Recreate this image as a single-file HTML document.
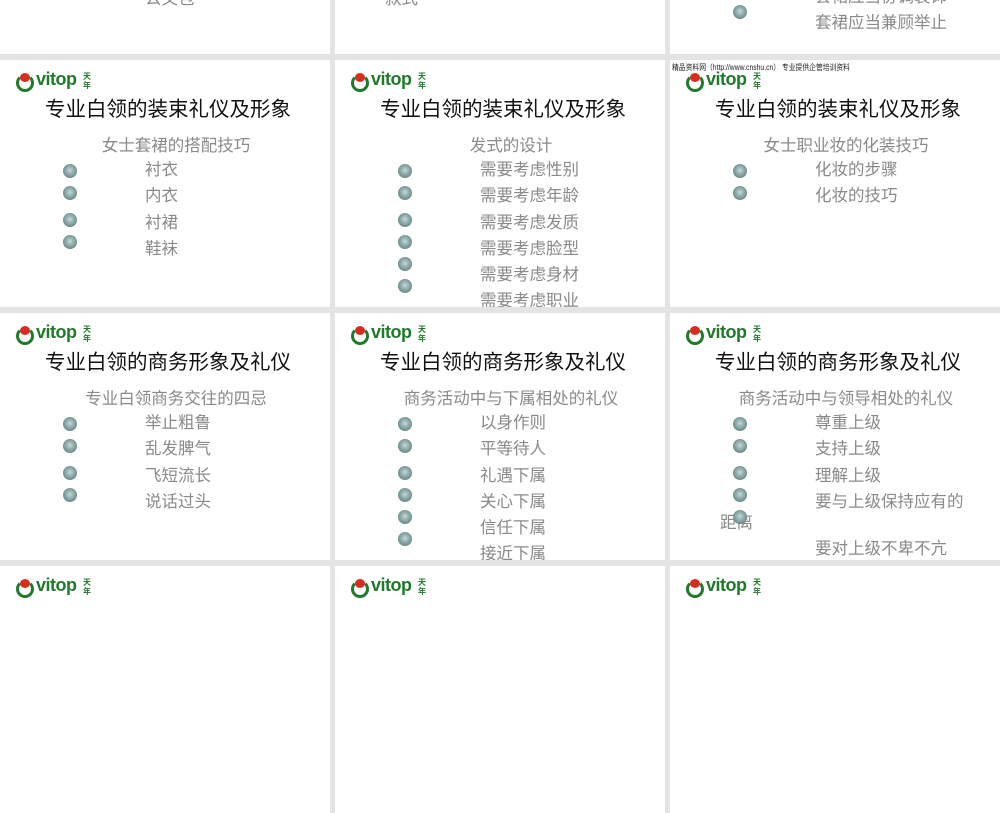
<!DOCTYPE html><html><head><meta charset="utf-8"><style>
body{margin:0;width:1000px;height:600px;background:#e4e4e4;overflow:hidden;position:relative;font-family:"Liberation Sans","Noto Sans CJK SC",sans-serif}
.p{position:absolute;width:330px;height:247px;background:#fff;overflow:hidden}
.t{position:absolute;left:0;width:336px;text-align:center;top:32px;font-size:20.5px;color:#111;white-space:nowrap}
.s{position:absolute;left:0;width:352px;text-align:center;top:72px;font-size:16.5px;color:#8a8a8a;white-space:nowrap}
.i{position:absolute;left:145px;font-size:16.5px;color:#8a8a8a;white-space:nowrap;line-height:20px}
.b{position:absolute;left:63px;width:14px;height:14px;border-radius:50%;background:radial-gradient(circle at 50% 45%,#c8dada 0,#9ab5b5 30%,#6f8d8d 70%,#4e6868 100%)}
.lg{position:absolute;left:16px;top:12px;height:22px}
.lg .c{position:absolute;left:0;top:2px;width:12px;height:12px;border:3px solid #1f7a2a;border-top-color:#fff;border-radius:50%}
.lg .r{position:absolute;left:4px;top:1px;width:10px;height:9px;border-radius:50%;background:#d62d20}
.lg .v{position:absolute;left:20px;top:-3px;font-weight:bold;font-size:18px;color:#1f7a2a;letter-spacing:-0.5px}
.lg .n{position:absolute;left:67px;top:0px;font-size:8px;line-height:9px;color:#1f7a2a;font-weight:bold;width:9px}
.w{position:absolute;left:2px;top:2px;font-size:8px;color:#222;white-space:nowrap;transform:scaleX(.85);transform-origin:left}
</style></head><body>
<div class="p" style="left:0;top:-193px"><div class="i" style="left:145px;top:182px">公文包</div></div>
<div class="p" style="left:335px;top:-193px"><div class="b" style="left:23px;top:177px"></div><div class="i" style="left:50px;top:182px">款式</div></div>
<div class="p" style="left:670px;top:-193px"><div class="i" style="top:180px">套裙应当协调装饰</div><div class="b" style="top:198px"></div><div class="i" style="top:206px">套裙应当兼顾举止</div></div>

<div class="p" style="left:0;top:60px"><div class="lg"><div class="c"></div><div class="r"></div><div class="v">vitop</div><div class="n">天年</div></div>
<div class="t">专业白领的装束礼仪及形象</div><div class="s">女士套裙的搭配技巧</div>
<div class="b" style="top:104px"></div><div class="b" style="top:126px"></div><div class="b" style="top:153px"></div><div class="b" style="top:175px"></div>
<div class="i" style="top:100px">衬衣</div><div class="i" style="top:126px">内衣</div><div class="i" style="top:153px">衬裙</div><div class="i" style="top:179px">鞋袜</div></div>

<div class="p" style="left:335px;top:60px"><div class="lg"><div class="c"></div><div class="r"></div><div class="v">vitop</div><div class="n">天年</div></div>
<div class="t">专业白领的装束礼仪及形象</div><div class="s">发式的设计</div>
<div class="b" style="top:104px"></div><div class="b" style="top:126px"></div><div class="b" style="top:153px"></div><div class="b" style="top:175px"></div><div class="b" style="top:197px"></div><div class="b" style="top:219px"></div>
<div class="i" style="top:100px">需要考虑性别</div><div class="i" style="top:126px">需要考虑年龄</div><div class="i" style="top:153px">需要考虑发质</div><div class="i" style="top:179px">需要考虑脸型</div><div class="i" style="top:205px">需要考虑身材</div><div class="i" style="top:231px">需要考虑职业</div></div>

<div class="p" style="left:670px;top:60px"><div class="w">精品资料网（http://www.cnshu.cn） 专业提供企管培训资料</div><div class="lg"><div class="c"></div><div class="r"></div><div class="v">vitop</div><div class="n">天年</div></div>
<div class="t">专业白领的装束礼仪及形象</div><div class="s">女士职业妆的化装技巧</div>
<div class="b" style="top:104px"></div><div class="b" style="top:126px"></div>
<div class="i" style="top:100px">化妆的步骤</div><div class="i" style="top:126px">化妆的技巧</div></div>

<div class="p" style="left:0;top:313px"><div class="lg"><div class="c"></div><div class="r"></div><div class="v">vitop</div><div class="n">天年</div></div>
<div class="t">专业白领的商务形象及礼仪</div><div class="s">专业白领商务交往的四忌</div>
<div class="b" style="top:104px"></div><div class="b" style="top:126px"></div><div class="b" style="top:153px"></div><div class="b" style="top:175px"></div>
<div class="i" style="top:100px">举止粗鲁</div><div class="i" style="top:126px">乱发脾气</div><div class="i" style="top:153px">飞短流长</div><div class="i" style="top:179px">说话过头</div></div>

<div class="p" style="left:335px;top:313px"><div class="lg"><div class="c"></div><div class="r"></div><div class="v">vitop</div><div class="n">天年</div></div>
<div class="t">专业白领的商务形象及礼仪</div><div class="s">商务活动中与下属相处的礼仪</div>
<div class="b" style="top:104px"></div><div class="b" style="top:126px"></div><div class="b" style="top:153px"></div><div class="b" style="top:175px"></div><div class="b" style="top:197px"></div><div class="b" style="top:219px"></div>
<div class="i" style="top:100px">以身作则</div><div class="i" style="top:126px">平等待人</div><div class="i" style="top:153px">礼遇下属</div><div class="i" style="top:179px">关心下属</div><div class="i" style="top:205px">信任下属</div><div class="i" style="top:231px">接近下属</div></div>

<div class="p" style="left:670px;top:313px"><div class="lg"><div class="c"></div><div class="r"></div><div class="v">vitop</div><div class="n">天年</div></div>
<div class="t">专业白领的商务形象及礼仪</div><div class="s">商务活动中与领导相处的礼仪</div>
<div class="i" style="top:100px">尊重上级</div><div class="i" style="top:126px">支持上级</div><div class="i" style="top:153px">理解上级</div><div class="i" style="top:179px">要与上级保持应有的</div><div class="i" style="left:50px;top:200px">距离</div><div class="i" style="top:226px">要对上级不卑不亢</div>
<div class="b" style="top:104px"></div><div class="b" style="top:126px"></div><div class="b" style="top:153px"></div><div class="b" style="top:175px"></div><div class="b" style="top:197px"></div></div>

<div class="p" style="left:0;top:566px"><div class="lg"><div class="c"></div><div class="r"></div><div class="v">vitop</div><div class="n">天年</div></div></div>
<div class="p" style="left:335px;top:566px"><div class="lg"><div class="c"></div><div class="r"></div><div class="v">vitop</div><div class="n">天年</div></div></div>
<div class="p" style="left:670px;top:566px"><div class="lg"><div class="c"></div><div class="r"></div><div class="v">vitop</div><div class="n">天年</div></div></div>
</body></html>
